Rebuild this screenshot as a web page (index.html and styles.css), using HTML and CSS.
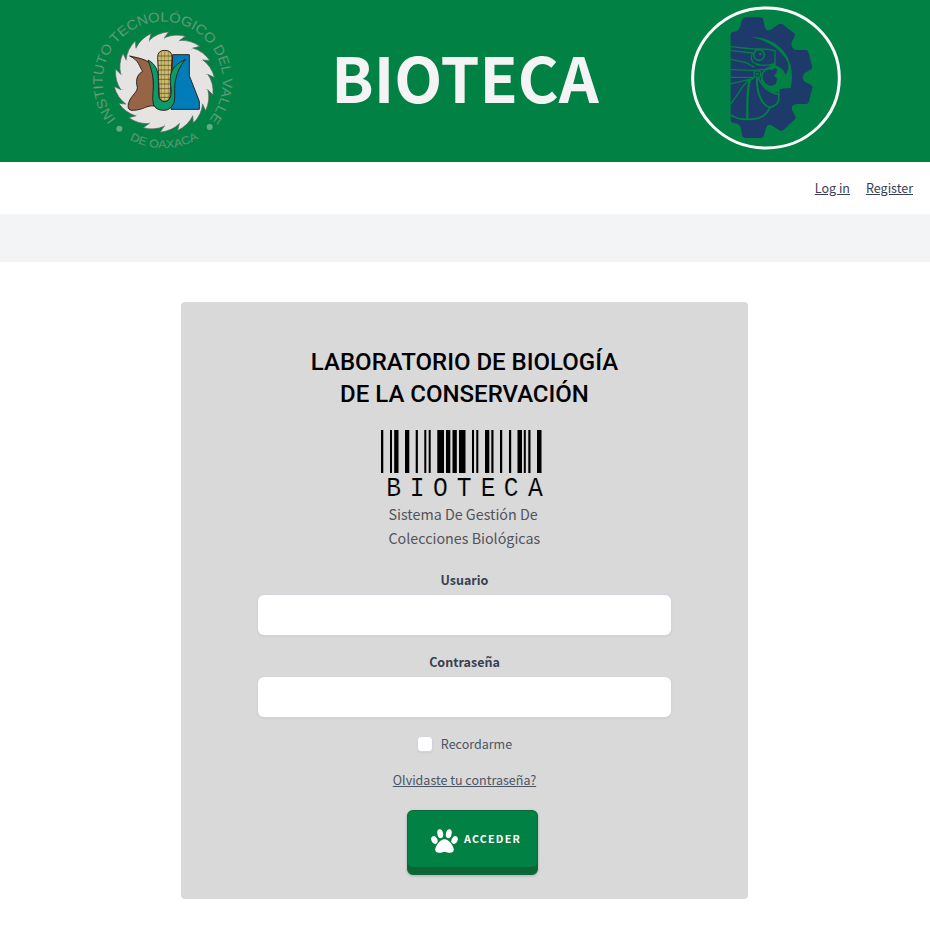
FILE: index.html
```html
<!DOCTYPE html>
<html lang="es">
<head>
<meta charset="utf-8">
<title>Bioteca</title>
<link rel="stylesheet" href="styles.css">
</head>
<body>
<header class="banner">
  <svg class="seal" viewBox="0 0 480 480" aria-hidden="true">
    <defs>
      <path id="arc-top" d="M93 358A180 180 0 1 1 379 350"/>
      <path id="arc-bottom" d="M134 418A207 207 0 0 0 350 410"/>
      <g id="tooth">
        <path class="cream" d="M0 0L-52-122Q-30-146 5-151L-7-132Z"/>
        <path class="edge" d="M-52-122Q-30-146 5-151L-7-132"/>
      </g>
      <g id="teeth6">
        <use href="#tooth"/><use href="#tooth" transform="rotate(20)"/><use href="#tooth" transform="rotate(40)"/><use href="#tooth" transform="rotate(60)"/><use href="#tooth" transform="rotate(80)"/><use href="#tooth" transform="rotate(100)"/>
      </g>
    </defs>
    <text class="seal-text"><textPath href="#arc-top" textLength="812" lengthAdjust="spacingAndGlyphs">INSTITUTO TECNOLÓGICO DEL VALLE</textPath></text>
    <text class="seal-text seal-text-small"><textPath href="#arc-bottom" textLength="216" lengthAdjust="spacingAndGlyphs">DE OAXACA</textPath></text>
    <circle class="seal-dot" cx="103" cy="386" r="9"/>
    <circle class="seal-dot" cx="374" cy="381" r="9"/>
    <g transform="translate(238 246) rotate(3)">
      <use href="#teeth6"/><use href="#teeth6" transform="rotate(120)"/><use href="#teeth6" transform="rotate(240)"/>
      <circle class="cream" r="126"/>
    </g>
    <g stroke="#2b2522" stroke-width="3">
      <path fill="#986446" d="M134 168C160 174 185 178 194 190Q206 215 205 250L207 318C185 315 175 330 145 331C128 332 127 320 132 306C139 286 158 276 157 262C150 235 160 222 173 214C163 201 163 181 134 168Z"/>
      <path fill="#007db8" d="M263 164H313V227L343 304V328H258Z"/>
      <path fill="#d0be6b" d="M218 172Q218 151 239 151Q261 151 261 172L255 290Q252 304 239 304Q226 304 223 290Z"/>
      <path fill="none" stroke="#6e6236" stroke-width="1.500" d="M229 153V300M239 151V304M250 153V300"/>
      <path fill="none" stroke="#4a4028" stroke-width="2" d="M218 168H261M218 182H261M218 196H261M219 210H260M220 224H259M221 238H258M222 252H257M222 266H257M223 280H256M224 292H254"/>
      <path fill="#0a9b66" d="M189 180C212 192 221 213 220 242L221 287Q223 305 239 305Q255 304 258 284C261 265 253 250 256 230C259 204 277 190 302 178C284 198 275 219 270 250C267 271 272 289 267 308Q257 331 237 331Q211 331 205 312C200 290 207 267 205 242C203 219 196 199 189 180Z"/>
    </g>
  </svg>
  <h1 class="banner-title">BIOTECA</h1>
  <svg class="emblem" viewBox="0 0 480 480" aria-hidden="true">
    <ellipse cx="243" cy="234" rx="220" ry="210" fill="none" stroke="#fff" stroke-width="9"/>
    <path fill="#1d3a6b" d="M186 52H224Q234 52 235 60L239 80Q243 94 256 90L281 73Q288 69 294 74L326 98Q333 103 328 111L320 126Q316 146 333 150H362Q368 150 370 157L381 198Q383 206 375 210L359 219Q347 233 359 245L377 254Q384 257 382 265L371 307Q369 313 361 312H336Q317 314 321 330L331 349Q334 355 328 359L296 389Q289 395 282 390L262 377Q247 370 243 383L237 405Q235 414 226 414H181Q173 414 171 405L168 385Q164 371 151 370Q137 369 137 359V106Q137 96 147 95Q162 94 165 82L171 61Q173 52 186 52Z"/>
    <g transform="translate(119 30)">
      <path fill="#018143" d="M78 82C120 80 160 98 183 132C202 161 207 205 197 235Q180 233 165 238Q163 248 150 247Q124 242 109 212Q107 185 124 177L149 164Q168 168 176 180L183 194Q190 181 188 166Q182 139 155 115C130 96 107 86 78 82Z"/>
      <path fill="#1d3a6b" d="M150 118Q178 132 190 158Q194 178 183 193Q175 173 150 164Z"/>
      <path fill="#1d3a6b" d="M119 186Q129 176 143 180L151 173L157 178L155 189L148 197L158 207L153 221L141 228Q122 226 115 208Q112 194 119 186Z"/>
      <g fill="none" stroke="#018143" stroke-width="4" stroke-linecap="round">
        <path d="M19 110L84 117Q115 115 151 122V163M19 122L84 129M19 148L64 158L88 171M82 133Q75 154 94 162Q120 171 150 161M19 179L87 181L121 178L151 163M19 202L88 202"/>
        <path d="M19 221Q50 214 87 205M76 208Q57 222 43 247L18 282" stroke-width="4"/>
        <path d="M77 208Q67 224 68 326" stroke-width="7"/>
        <path d="M97 205C96 247 109 283 136 293" stroke-width="6"/>
        <path d="M102 205Q120 247 163 253" stroke-width="5"/>
        <path d="M19 316Q41 329 66 328Q121 330 135 293Q159 286 162 270V240" stroke-width="5"/>
      </g>
      <circle cx="103" cy="135" r="16" fill="#1d3a6b" stroke="#018143" stroke-width="5"/>
      <circle cx="107" cy="132" r="4" fill="#018143"/>
      <circle cx="98" cy="192" r="10" fill="#1d3a6b" stroke="#018143" stroke-width="4"/>
      <circle cx="98" cy="192" r="4" fill="#018143"/>
    </g>
  </svg>
</header>
<nav class="nav">
  <a href="#">Log in</a>
  <a href="#">Register</a>
</nav>
<div class="strip"></div>
<main class="card">
  <h2 class="card-title">LABORATORIO DE BIOLOGÍA<br>DE LA CONSERVACIÓN</h2>
  <svg class="barcode" viewBox="0 0 190 75" role="img" aria-label="BIOTECA">
    <path d="M11 5h2.300v43h-2.300zM20 5h2v43h-2zM24.200 5h4.300v43h-4.300zM35 5h4.300v43h-4.300zM45.700 5h2.200v43h-2.200zM54.300 5h2v43h-2zM58.700 5h2v43h-2zM67.300 5h6.700v43h-6.700zM76 5h4.300v43h-4.300zM82.500 5h4.300v43h-4.300zM89 5h6.500v43H89zM102 5h2v43h-2zM106.300 5h2v43h-2zM115 5h4.300v43H115zM121.300 5h2.200v43h-2.200zM130 5h2.200v43H130zM139 5h2.200v43H139zM147.500 5h4.500v43h-4.500zM153.800 5h2v43h-2zM158.300 5h2.200v43h-2.200zM167 5h4.500v43H167z"/>
    <text class="barcode-text" transform="translate(1 71) scale(.88 1)" x="17.300 43.900 70.600 97.500 124.600 151 178.300" y="0">BIOTECA</text>
  </svg>
  <p class="subtitle">Sistema De Gestión De<br>Colecciones Biológicas</p>
  <form class="form">
    <label class="label" for="user">Usuario</label>
    <input class="field" id="user" type="text">
    <label class="label" for="pass">Contraseña</label>
    <input class="field" id="pass" type="password">
    <label class="remember"><input class="check" type="checkbox"><span>Recordarme</span></label>
    <a class="forgot" href="#">Olvidaste tu contraseña?</a>
    <button class="submit" type="button">
      <svg class="paw" viewBox="0 0 512 512" aria-hidden="true"><path fill="currentColor" d="M256 224c-79.410 0-176 122.760-176 200.250 0 34.900 26.810 55.750 71.740 55.750 48.840 0 65.090-15.080 104.260-15.080 39.510 0 55.850 15.080 104.260 15.080 44.930 0 71.740-20.850 71.740-55.750C432 346.760 335.410 224 256 224z"/><g fill="currentColor"><ellipse cx="65" cy="236" rx="56" ry="77" transform="rotate(-24 65 236)"/><ellipse cx="175" cy="117" rx="54" ry="86" transform="rotate(-12 175 117)"/><ellipse cx="337" cy="117" rx="54" ry="86" transform="rotate(12 337 117)"/><ellipse cx="447" cy="236" rx="56" ry="77" transform="rotate(24 447 236)"/></g></svg>
      <span>ACCEDER</span>
    </button>
  </form>
</main>
</body>
</html>
```
FILE: styles.css
```css
* { box-sizing: border-box; }

body {
  margin: 0;
  background: #fff;
  color: #4b5563;
  font: 12.520px/20px "Noto Sans CJK SC", sans-serif;
}

.banner {
  display: grid;
  grid-template-columns: 160px 1fr 160px;
  height: 162px;
  padding: 0 85px;
  background: #018143;
}

.banner-title {
  margin: 0;
  color: #f4f4f4;
  font-size: 62.400px;
  font-weight: 700;
  line-height: 153px;
  text-align: center;
}

.seal, .emblem { width: 160px; height: 160px; }

.cream { fill: #e5e4e2; }
.edge { fill: none; stroke: #55675a; stroke-width: 2; }
.seal-dot { fill: #62ac85; }
.seal-text {
  fill: #64aa82;
  stroke: #347f58;
  stroke-width: 1;
  font: 41px "Liberation Sans", sans-serif;
}
.seal-text-small { font-size: 34px; }

.nav {
  display: flex;
  justify-content: flex-end;
  gap: 16px;
  height: 52px;
  padding: 16px 17px;
}
.nav a { color: #374151; }

.strip { height: 48px; background: #f3f4f6; }

.card {
  display: flex;
  flex-direction: column;
  align-items: center;
  width: 567px;
  height: 597px;
  margin: 40px 0 0 181px;
  padding-top: 44px;
  border-radius: 4px;
  background: #d9d9d9;
}

.card-title {
  margin: 0;
  color: #000;
  font: 500 24px/32px Roboto, sans-serif;
  text-align: center;
}

.barcode {
  display: block;
  width: 190px;
  height: 75px;
  margin-top: 15px;
  overflow: visible;
}
.barcode-text {
  font: 28px "Liberation Mono", monospace;
  stroke: #d9d9d9;
  stroke-width: .2px;
}

.subtitle {
  width: 152px;
  margin: 2px 0 0;
  color: #52525b;
  font-size: 14.310px;
  line-height: 24px;
  white-space: nowrap;
}

.form {
  display: flex;
  flex-direction: column;
  align-items: center;
  width: 413px;
  margin-top: 20px;
}

.label { color: #374151; font-weight: 700; }

.field {
  width: 100%;
  height: 40px;
  margin: 5px 0 17px;
  border: 0;
  border-radius: 6px;
  background: #fff;
  box-shadow: 0 0 0 1px #d1d5db, 0 1px 3px rgba(0, 0, 0, .08);
}

.remember { display: flex; align-items: center; gap: 8px; }
.check {
  appearance: none;
  width: 16px;
  height: 16px;
  margin: 0;
  border: 1px solid #d1d5db;
  border-radius: 4px;
  background: #fff;
  box-shadow: 0 1px 2px rgba(0, 0, 0, .05);
}

.forgot { margin-top: 16px; color: #4b5563; }

.submit {
  display: flex;
  align-items: center;
  gap: 6px;
  width: 131px;
  height: 65px;
  margin: 20px 0 0 16px;
  padding: 0 0 6px 23px;
  border: 1px solid #096b39;
  border-bottom-width: 2px;
  border-radius: 6px;
  background: #018143;
  box-shadow: inset 0 -6px #0b6536, 0 1px 3px rgba(0, 0, 0, .2);
  color: #fff;
  font: 700 10.730px/16px "Noto Sans CJK SC", sans-serif;
  letter-spacing: 1.200px;
}
.paw { width: 27px; height: 28px; margin-top: 3px; }
```
